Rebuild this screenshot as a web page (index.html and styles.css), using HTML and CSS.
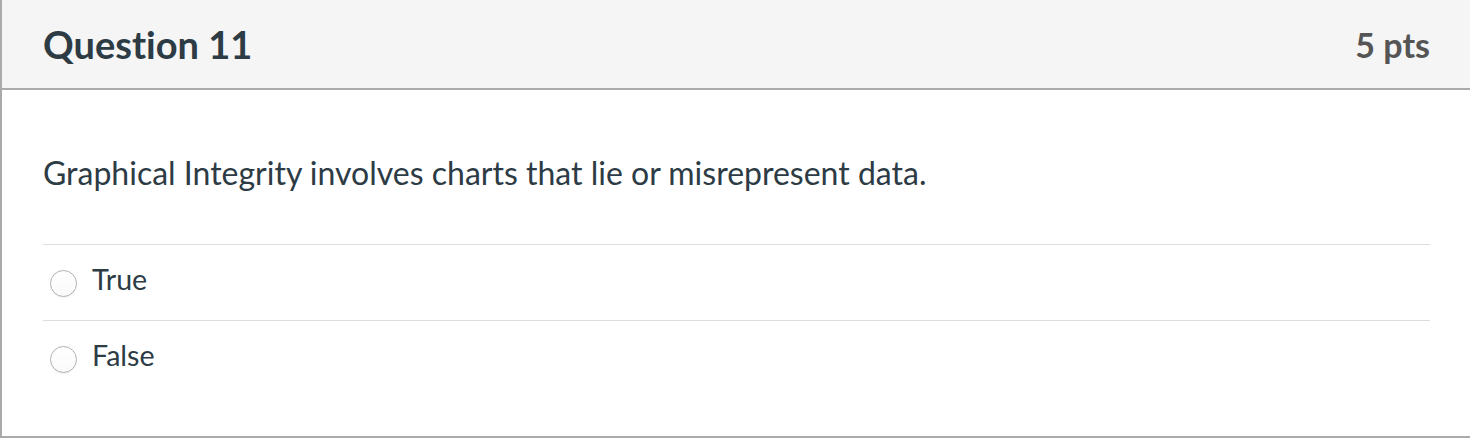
FILE: index.html
```html
<!DOCTYPE html>
<html>
<head>
<meta charset="utf-8">
<link rel="stylesheet" href="styles.css">
</head>
<body>
<div class="question">
  <div class="q-header">
    <h2 class="q-title">Question 11</h2>
    <div class="q-points">5 pts</div>
  </div>
  <div class="q-body">
    <p class="q-text">Graphical Integrity involves charts that lie or misrepresent data.</p>
    <div class="answers">
      <label class="answer"><span class="radio"></span><span class="answer-label">True</span></label>
      <label class="answer"><span class="radio"></span><span class="answer-label">False</span></label>
    </div>
  </div>
</div>
</body>
</html>
```
FILE: styles.css
```css
html, body {
  margin: 0;
  padding: 0;
  background: #fff;
}
body {
  font-family: Lato, "Open Sans", sans-serif;
  color: #2d3b45;
  font-variant-ligatures: none;
}
.question {
  border-left: 2px solid #aaaaaa;
  border-bottom: 2px solid #aaaaaa;
  height: 438px;
  box-sizing: border-box;
  display: flex;
  flex-direction: column;
}
.q-header {
  background: #f5f5f5;
  height: 90px;
  box-sizing: border-box;
  border-bottom: 2px solid #aaaaaa;
  display: flex;
  align-items: center;
  justify-content: space-between;
  padding: 0 40px 0 41px;
}
.q-title {
  margin: 0;
  font-size: 38px;
  font-weight: 700;
  color: #2d3b45;
}
.q-points {
  font-size: 34px;
  font-weight: 700;
  color: #555555;
}
.q-body {
  padding: 0 40px 0 41px;
}
.q-text {
  margin: 0 0 51px;
  padding-top: 63px;
  font-size: 32px;
  line-height: 40px;
}
.answer {
  display: flex;
  align-items: flex-start;
  height: 76px;
  border-top: 1px solid #dddddd;
  box-sizing: border-box;
}
.radio {
  width: 27px;
  height: 27px;
  border-radius: 50%;
  border: 1px solid #b0b0b0;
  box-sizing: border-box;
  background: linear-gradient(#ffffff, #fafafa);
  box-shadow: 0 1px 1px rgba(0,0,0,0.05);
  margin: 25px 15px 0 7px;
}
.answer-label {
  font-size: 28.6px;
  line-height: 35px;
  padding-top: 17px;
}
```
